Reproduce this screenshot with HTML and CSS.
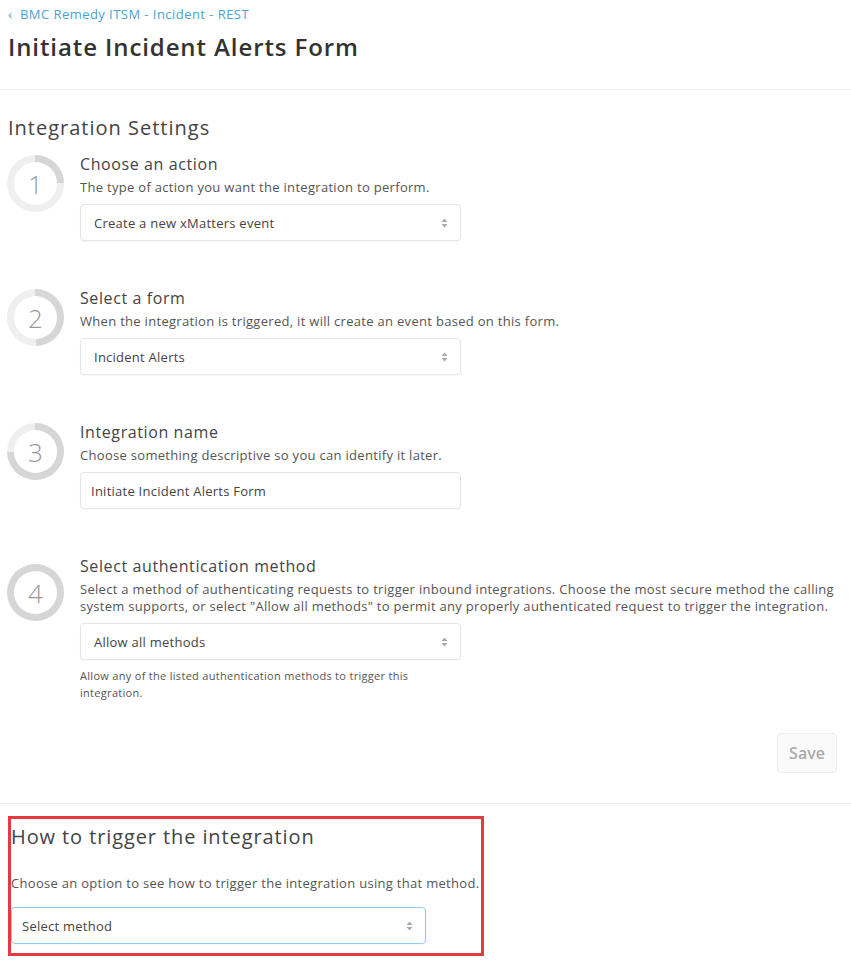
FILE: index.html
```html
<!DOCTYPE html>
<html>
<head>
<meta charset="utf-8">
<title>Initiate Incident Alerts Form</title>
<link rel="stylesheet" href="styles.css">
</head>
<body>
<header class="header">
  <a class="crumb" href="#">&#8249;&nbsp; BMC Remedy ITSM - Incident - REST</a>
  <h1 class="title">Initiate Incident Alerts Form</h1>
</header>

<main class="page">
  <h2 class="section-title">Integration Settings</h2>

  <div class="step">
    <div class="ring ring-25"><span>1</span></div>
    <div class="step-body">
      <div class="step-title">Choose an action</div>
      <div class="step-desc">The type of action you want the integration to perform.</div>
      <div class="select">
        <span>Create a new xMatters event</span>
        <svg class="arrows" width="7" height="10" viewBox="0 0 7 10"><path d="M3.5 0.5L6.5 4H0.5z M3.5 9.5L6.5 6H0.5z" fill="#aaa"/></svg>
      </div>
    </div>
  </div>

  <div class="step">
    <div class="ring ring-50"><span>2</span></div>
    <div class="step-body">
      <div class="step-title">Select a form</div>
      <div class="step-desc">When the integration is triggered, it will create an event based on this form.</div>
      <div class="select">
        <span>Incident Alerts</span>
        <svg class="arrows" width="7" height="10" viewBox="0 0 7 10"><path d="M3.5 0.5L6.5 4H0.5z M3.5 9.5L6.5 6H0.5z" fill="#aaa"/></svg>
      </div>
    </div>
  </div>

  <div class="step">
    <div class="ring ring-75"><span>3</span></div>
    <div class="step-body">
      <div class="step-title">Integration name</div>
      <div class="step-desc">Choose something descriptive so you can identify it later.</div>
      <div class="input">Initiate Incident Alerts Form</div>
    </div>
  </div>

  <div class="step step-last">
    <div class="ring ring-100 ring-low"><span>4</span></div>
    <div class="step-body">
      <div class="step-title">Select authentication method</div>
      <div class="step-desc">Select a method of authenticating requests to trigger inbound integrations. Choose the most secure method the calling system supports, or select "Allow all methods" to permit any properly authenticated request to trigger the integration.</div>
      <div class="select">
        <span>Allow all methods</span>
        <svg class="arrows" width="7" height="10" viewBox="0 0 7 10"><path d="M3.5 0.5L6.5 4H0.5z M3.5 9.5L6.5 6H0.5z" fill="#aaa"/></svg>
      </div>
      <div class="help">Allow any of the listed authentication methods to trigger this integration.</div>
    </div>
  </div>

  <div class="actions">
    <button class="save" type="button">Save</button>
  </div>
</main>

<section class="trigger">
  <div class="trigger-box">
    <h2 class="trigger-title">How to trigger the integration</h2>
    <div class="trigger-desc">Choose an option to see how to trigger the integration using that method.</div>
    <div class="select select-focus">
      <span>Select method</span>
      <svg class="arrows" width="7" height="10" viewBox="0 0 7 10"><path d="M3.5 0.5L6.5 4H0.5z M3.5 9.5L6.5 6H0.5z" fill="#aaa"/></svg>
    </div>
  </div>
</section>
</body>
</html>
```

FILE: styles.css
```css
* { box-sizing: border-box; }

body {
  margin: 0;
  background: #fff;
  font-family: "Open Sans", "Lato", sans-serif;
  color: #444;
}

.header {
  padding: 6px 8px 27px;
  border-bottom: 1px solid #ececec;
}

.crumb {
  display: block;
  font-size: 13px;
  line-height: 16px;
  letter-spacing: 0.45px;
  color: #4aa3d4;
  text-decoration: none;
}

.title {
  margin: 10px 0 0;
  font-size: 24px;
  line-height: 30px;
  letter-spacing: 0.9px;
  font-weight: 600;
  color: #333;
}

.page {
  padding: 0 8px;
  border-bottom: 1px solid #ececec;
}

.section-title {
  margin: 25px 0 13px;
  font-size: 20px;
  line-height: 26px;
  letter-spacing: 1px;
  font-weight: 400;
  color: #444;
}

.step {
  display: flex;
  gap: 16px;
  margin-bottom: 47px;
}

.step-last { margin-bottom: 0; }

.ring {
  flex: none;
  width: 57px;
  height: 57px;
  margin: 1px 0 0 -1px;
  border-radius: 50%;
  display: flex;
  align-items: center;
  justify-content: center;
  position: relative;
}

.ring::before {
  content: "";
  position: absolute;
  inset: 7px;
  border-radius: 50%;
  background: #fff;
}

.ring span {
  position: relative;
  font-size: 26px;
  color: #999;
  font-weight: 300;
}

.ring-25 { background: conic-gradient(#d6d6d6 0 25%, #efefef 25% 100%); }
.ring-50 { background: conic-gradient(#d6d6d6 0 50%, #efefef 50% 100%); }
.ring-75 { background: conic-gradient(#d6d6d6 0 75%, #efefef 75% 100%); }
.ring-100 { background: #d6d6d6; }
.ring-low { margin-top: 8px; }

.step-body { flex: 1; min-width: 0; }

.step-title {
  font-size: 16px;
  line-height: 20px;
  letter-spacing: 0.6px;
  color: #444;
}

.step-desc {
  margin-top: 5px;
  font-size: 13px;
  line-height: 17px;
  letter-spacing: 0.3px;
  color: #555;
}

.select, .input {
  margin-top: 8px;
  width: 381px;
  height: 37px;
  border: 1px solid #e6e6e6;
  border-radius: 4px;
  box-shadow: 0 1px 2px rgba(0,0,0,0.04);
  display: flex;
  align-items: center;
  justify-content: space-between;
  padding: 0 12px 0 13px;
  font-size: 13px;
  letter-spacing: 0.25px;
  color: #444;
  background: #fff;
}

.input { padding-left: 10px; }

.help {
  margin-top: 7px;
  width: 381px;
  font-size: 11px;
  line-height: 17px;
  letter-spacing: 0.3px;
  color: #555;
}

.actions {
  display: flex;
  justify-content: flex-end;
  padding: 32px 6px 30px 0;
}

.save {
  width: 60px;
  height: 40px;
  border: 1px solid #eeeeee;
  border-radius: 4px;
  background: #fafafa;
  color: #aaa;
  font-family: inherit;
  font-size: 16px;
  font-weight: 600;
}

.trigger {
  padding: 12px 8px 0;
}

.trigger-box {
  width: 476px;
  border: 3px solid #e63a43;
  padding: 5px 0 9px 0;
}

.trigger-title {
  margin: 0;
  font-size: 20px;
  line-height: 26px;
  letter-spacing: 0.9px;
  font-weight: 400;
  color: #444;
}

.trigger-desc {
  margin-top: 24px;
  font-size: 13px;
  line-height: 18px;
  letter-spacing: 0.3px;
  color: #555;
}

.trigger .select {
  margin-top: 15px;
  width: 415px;
}

.select-focus {
  border: 1px solid #8ccbea;
  padding-left: 10px;
}
```
